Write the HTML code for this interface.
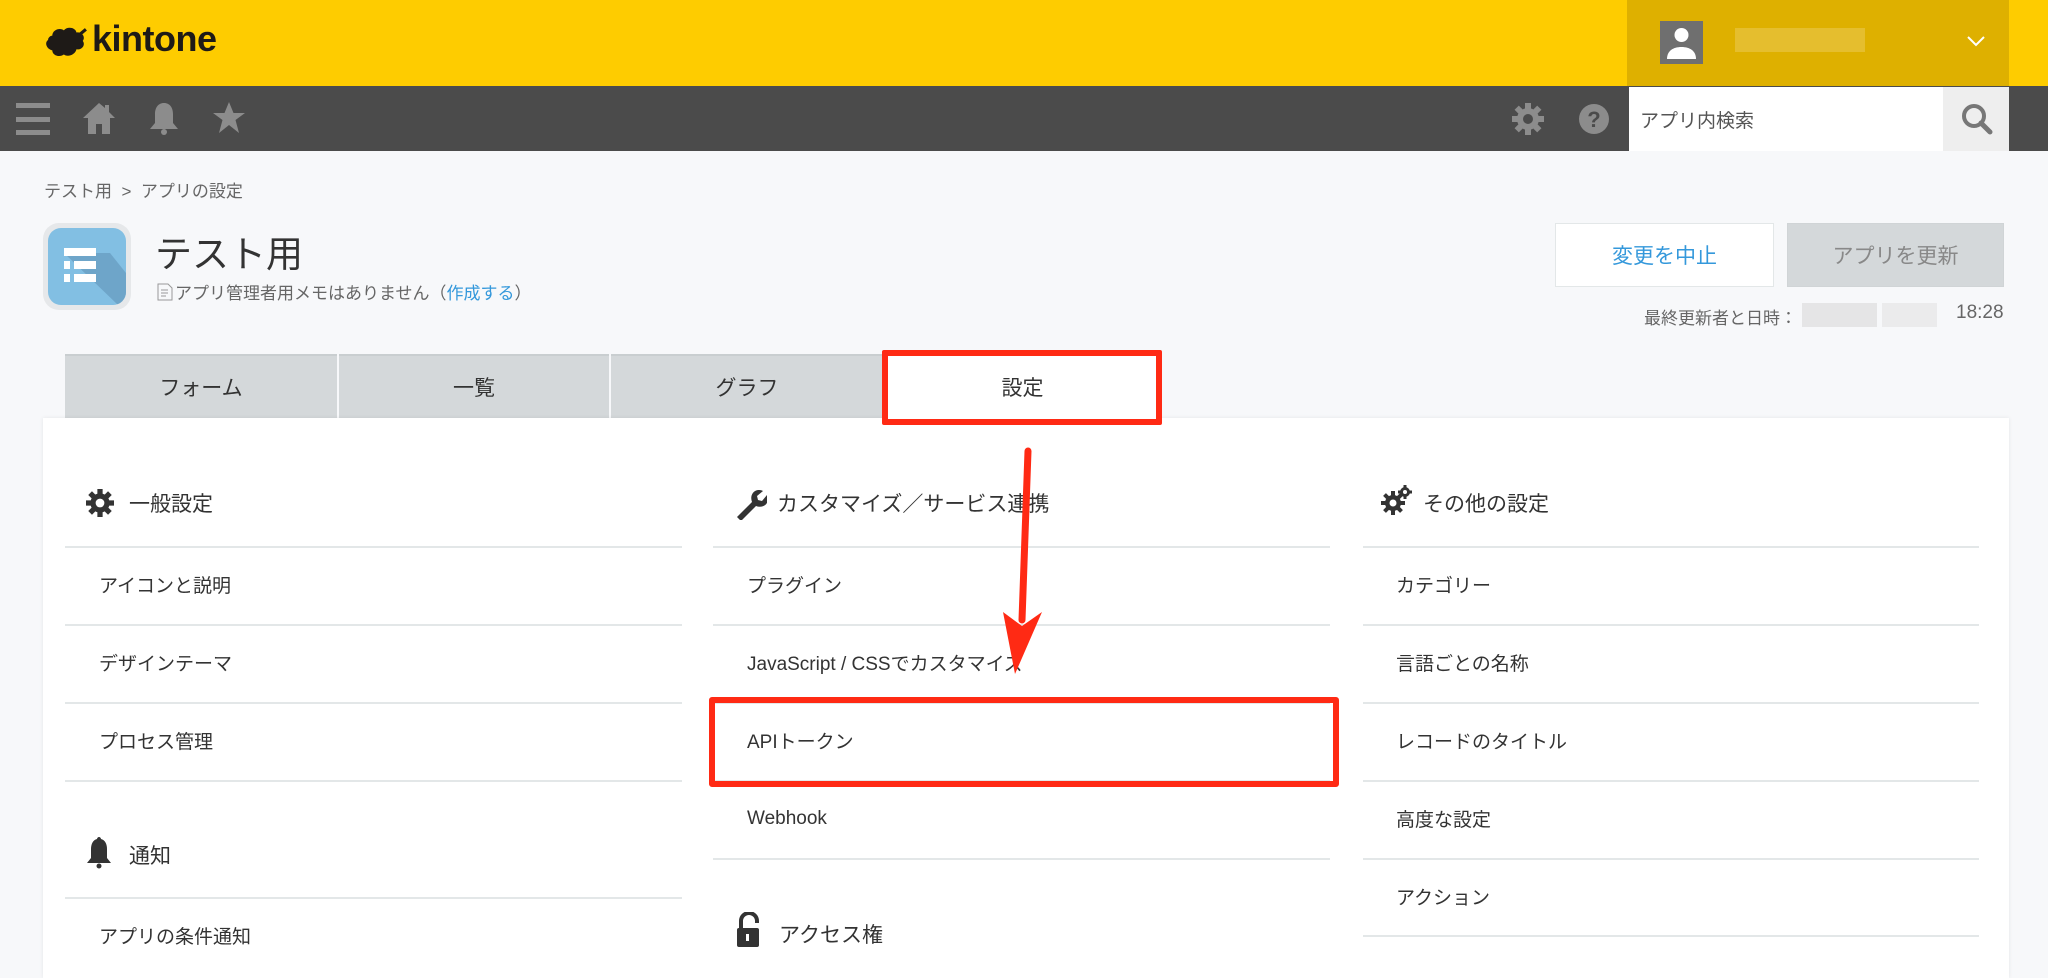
<!DOCTYPE html>
<html><head><meta charset="utf-8"><style>
*{margin:0;padding:0;box-sizing:border-box}
body{width:2048px;height:961px;overflow:hidden;background:#f7f8fa;font-family:"Liberation Sans","Noto Sans CJK JP",sans-serif;color:#333;position:relative}
.a{position:absolute}
.t{position:absolute;white-space:nowrap}
.line{position:absolute;height:2px;background:#e3e7e8}
.row{position:absolute;font-size:19px;color:#333;white-space:nowrap}
.h{position:absolute;font-size:21px;color:#333;white-space:nowrap}
</style></head><body>
<div class="a" style="left:0;top:0;width:2048px;height:86px;background:#fecc00"></div>
<div class="a" style="left:1627px;top:0;width:382px;height:86px;background:#deb000"></div>
<svg class="a" style="left:46px;top:25px" width="42" height="36" viewBox="0 0 40 34"><path d="M6 10c0-6 8-8 11-5 3-4 11-3 12 2 5-1 9 4 6 8 3 4-1 9-6 8-1 5-8 8-12 5-4 3-11 1-11-4-5-1-8-7-4-10 0-2 2-4 4-4z" fill="#1e1a17"/><path d="M32 9l6-5" stroke="#1e1a17" stroke-width="3"/></svg>
<div class="t" style="left:92px;top:18px;font-size:36px;font-weight:bold;color:#1e1a17;letter-spacing:-0.5px">kintone</div>
<div class="a" style="left:1660px;top:21px;width:43px;height:43px;background:#6f6f6f"></div>
<svg class="a" style="left:1660px;top:21px" width="43" height="43" viewBox="0 0 43 43"><circle cx="21.5" cy="14" r="7" fill="#fff"/><path d="M7 38c0-8 6-12 14.5-12S36 30 36 38z" fill="#fff"/></svg>
<div class="a" style="left:1735px;top:28px;width:130px;height:24px;background:#e6c23a;opacity:.8"></div>
<svg class="a" style="left:1966px;top:34px" width="20" height="14"><path d="M2 3l8 8 8-8" stroke="#fff" stroke-width="2" fill="none"/></svg>
<div class="a" style="left:0;top:86px;width:2048px;height:65px;background:#4b4b4b"></div>
<svg class="a" style="left:16px;top:102px" width="34" height="34"><g fill="#8c8c8c"><rect x="0" y="1" width="34" height="5"/><rect x="0" y="15" width="34" height="5"/><rect x="0" y="28" width="34" height="5"/></g></svg>
<svg class="a" style="left:82px;top:101px" width="34" height="34" viewBox="0 0 34 34"><path d="M17 2L1 17h5v16h8v-10h6v10h8V17h5L27 11V4h-4v3z" fill="#8c8c8c"/></svg>
<svg class="a" style="left:147px;top:101px" width="34" height="36" viewBox="0 0 34 36"><path d="M17 2c-6 0-9 5-9 11v9l-5 6h28l-5-6v-9c0-6-3-11-9-11z" fill="#8c8c8c"/><circle cx="17" cy="31" r="3" fill="#8c8c8c"/></svg>
<svg class="a" style="left:212px;top:101px" width="34" height="34" viewBox="0 0 34 34"><path d="M17 1l4.5 11H33l-9.5 7 3.5 13-10-8-10 8 3.5-13L1 12h11.5z" fill="#8c8c8c"/></svg>
<svg class="a" style="left:1512px;top:103px" width="32" height="32" viewBox="0 0 32 32"><g fill="#8c8c8c"><circle cx="16" cy="16" r="11"/><rect x="13" y="0" width="6" height="32"/><rect x="0" y="13" width="32" height="6"/><rect x="13" y="0" width="6" height="32" transform="rotate(45 16 16)"/><rect x="13" y="0" width="6" height="32" transform="rotate(-45 16 16)"/></g><circle cx="16" cy="16" r="5" fill="#4b4b4b"/></svg>
<svg class="a" style="left:1578px;top:103px" width="32" height="32" viewBox="0 0 32 32"><circle cx="16" cy="16" r="15" fill="#8c8c8c"/><text x="16" y="24" text-anchor="middle" font-family="Liberation Sans" font-weight="bold" font-size="22" fill="#4b4b4b">?</text></svg>
<div class="a" style="left:1629px;top:87px;width:314px;height:64px;background:#fff"></div>
<div class="t" style="left:1640px;top:106px;font-size:19px;color:#555">アプリ内検索</div>
<div class="a" style="left:1943px;top:87px;width:66px;height:64px;background:#eeeeee"></div>
<svg class="a" style="left:1961px;top:103px" width="32" height="32" viewBox="0 0 32 32"><circle cx="13" cy="13" r="10" stroke="#777" stroke-width="4" fill="none"/><path d="M20 20l9 9" stroke="#777" stroke-width="5" stroke-linecap="round"/></svg>

<div class="t" style="left:44px;top:177px;font-size:17px;color:#666">テスト用&nbsp;&nbsp;&gt;&nbsp;&nbsp;アプリの設定</div>
<div class="a" style="left:43px;top:223px;width:88px;height:87px;border-radius:16px;background:#e6e8ea"></div>
<div class="a" style="left:48px;top:228px;width:78px;height:77px;border-radius:13px;background:#82bfe3;overflow:hidden">
<svg width="78" height="77"><path d="M16 25L70 77H78V45L62 25z" fill="#6ea5c9"/><g fill="#fff"><rect x="16" y="20" width="32" height="8"/><rect x="16" y="33" width="6" height="8"/><rect x="26" y="33" width="22" height="8"/><rect x="16" y="46" width="6" height="8"/><rect x="26" y="46" width="22" height="8"/></g></svg></div>
<div class="t" style="left:155px;top:224px;font-size:37px;color:#333">テスト用</div>
<svg class="a" style="left:157px;top:283px" width="16" height="18"><path d="M1 1h10l4 4v12H1z" fill="none" stroke="#999"/><path d="M4 7h7M4 10h7M4 13h5" stroke="#999"/></svg>
<div class="t" style="left:175px;top:279px;font-size:17px;color:#666">アプリ管理者用メモはありません（<span style="color:#3498db">作成する</span>）</div>

<div class="a" style="left:1555px;top:223px;width:219px;height:64px;background:#fff;border:1px solid #e3e7e8"></div>
<div class="t" style="left:1555px;top:240px;width:219px;text-align:center;font-size:21px;color:#3498db">変更を中止</div>
<div class="a" style="left:1787px;top:223px;width:217px;height:64px;background:#d4d8da;border:1px solid #d0d4d6"></div>
<div class="t" style="left:1787px;top:240px;width:217px;text-align:center;font-size:21px;color:#888">アプリを更新</div>
<div class="t" style="left:1644px;top:304px;font-size:17px;color:#666">最終更新者と日時：</div>
<div class="a" style="left:1802px;top:303px;width:75px;height:24px;background:#ddd;opacity:.7"></div>
<div class="a" style="left:1882px;top:303px;width:55px;height:24px;background:#e6e6e6;opacity:.7"></div>
<div class="t" style="left:1956px;top:302px;font-size:19px;color:#666">18:28</div>

<div class="a" style="left:65px;top:354px;width:272px;height:66px;background:#d4d8da;border-top:2px solid #c9ced0"></div>
<div class="a" style="left:339px;top:354px;width:270px;height:66px;background:#d4d8da;border-top:2px solid #c9ced0"></div>
<div class="a" style="left:611px;top:354px;width:272px;height:66px;background:#d4d8da;border-top:2px solid #c9ced0"></div>
<div class="t" style="left:65px;top:372px;width:272px;text-align:center;font-size:21px">フォーム</div>
<div class="t" style="left:339px;top:372px;width:270px;text-align:center;font-size:21px">一覧</div>
<div class="t" style="left:611px;top:372px;width:272px;text-align:center;font-size:21px">グラフ</div>
<div class="a" style="left:43px;top:418px;width:1966px;height:560px;background:#fff;box-shadow:0 0 4px rgba(0,0,0,.08)"></div>
<div class="a" style="left:885px;top:354px;width:275px;height:66px;background:#fff"></div>
<div class="t" style="left:885px;top:372px;width:275px;text-align:center;font-size:21px">設定</div>
<div class="a" style="left:882px;top:350px;width:280px;height:75px;border:6px solid #ff2a14;border-radius:2px"></div>

<!-- col1 -->
<svg class="a" style="left:86px;top:488px" width="28" height="30" viewBox="0 0 32 32"><g fill="#333"><circle cx="16" cy="16" r="11"/><rect x="13" y="0" width="6" height="32"/><rect x="0" y="13" width="32" height="6"/><rect x="13" y="0" width="6" height="32" transform="rotate(45 16 16)"/><rect x="13" y="0" width="6" height="32" transform="rotate(-45 16 16)"/></g><circle cx="16" cy="16" r="5" fill="#fff"/></svg>
<div class="h" style="left:129px;top:488px">一般設定</div>
<div class="line" style="left:65px;top:546px;width:617px"></div>
<div class="row" style="left:99px;top:571px">アイコンと説明</div>
<div class="line" style="left:65px;top:624px;width:617px"></div>
<div class="row" style="left:99px;top:649px">デザインテーマ</div>
<div class="line" style="left:65px;top:702px;width:617px"></div>
<div class="row" style="left:99px;top:727px">プロセス管理</div>
<div class="line" style="left:65px;top:780px;width:617px"></div>
<svg class="a" style="left:86px;top:836px" width="26" height="34" viewBox="0 0 26 34"><path d="M13 1c-1 0-2 1-2 2-4 1-6 5-6 10v9l-4 5h24l-4-5v-9c0-5-2-9-6-10 0-1-1-2-2-2z" fill="#333"/><circle cx="13" cy="30" r="2.5" fill="#333"/></svg>
<div class="h" style="left:129px;top:840px">通知</div>
<div class="line" style="left:65px;top:897px;width:617px"></div>
<div class="row" style="left:99px;top:922px">アプリの条件通知</div>

<!-- col2 -->
<svg class="a" style="left:733px;top:486px" width="34" height="34" viewBox="0 0 34 34"><path d="M4 31l15-15c-2-5 0-11 6-12 2 0 3 0 5 1l-6 5 1 4 4 1 5-6c1 2 1 4 1 5-1 6-7 8-12 6L8 35z" fill="#333"/></svg>
<div class="h" style="left:777px;top:488px">カスタマイズ／サービス連携</div>
<div class="line" style="left:713px;top:546px;width:617px"></div>
<div class="row" style="left:747px;top:571px">プラグイン</div>
<div class="line" style="left:713px;top:624px;width:617px"></div>
<div class="row" style="left:747px;top:649px">JavaScript / CSSでカスタマイズ</div>
<div class="line" style="left:713px;top:702px;width:617px"></div>
<div class="row" style="left:747px;top:727px">APIトークン</div>
<div class="line" style="left:713px;top:780px;width:617px"></div>
<div class="row" style="left:747px;top:808px">Webhook</div>
<div class="line" style="left:713px;top:858px;width:617px"></div>
<svg class="a" style="left:736px;top:912px" width="26" height="36" viewBox="0 0 26 36"><path d="M5 16V9a8 8 0 0 1 16 0v2" stroke="#333" stroke-width="4" fill="none"/><rect x="1" y="16" width="22" height="19" rx="2" fill="#333"/><rect x="10" y="22" width="3" height="7" fill="#fff"/></svg>
<div class="h" style="left:779px;top:919px">アクセス権</div>

<!-- col3 -->
<svg class="a" style="left:1380px;top:484px" width="34" height="34" viewBox="0 0 34 34"><g fill="#333"><circle cx="13" cy="19" r="8"/><rect x="11" y="7" width="4" height="24"/><rect x="1" y="17" width="24" height="4"/><rect x="11" y="7" width="4" height="24" transform="rotate(45 13 19)"/><rect x="11" y="7" width="4" height="24" transform="rotate(-45 13 19)"/><circle cx="25" cy="8" r="5"/><rect x="23.5" y="1" width="3" height="14"/><rect x="18" y="6.5" width="14" height="3"/></g><circle cx="13" cy="19" r="3.5" fill="#fff"/><circle cx="25" cy="8" r="2" fill="#fff"/></svg>
<div class="h" style="left:1423px;top:488px">その他の設定</div>
<div class="line" style="left:1363px;top:546px;width:616px"></div>
<div class="row" style="left:1396px;top:571px">カテゴリー</div>
<div class="line" style="left:1363px;top:624px;width:616px"></div>
<div class="row" style="left:1396px;top:649px">言語ごとの名称</div>
<div class="line" style="left:1363px;top:702px;width:616px"></div>
<div class="row" style="left:1396px;top:727px">レコードのタイトル</div>
<div class="line" style="left:1363px;top:780px;width:616px"></div>
<div class="row" style="left:1396px;top:805px">高度な設定</div>
<div class="line" style="left:1363px;top:858px;width:616px"></div>
<div class="row" style="left:1396px;top:883px">アクション</div>
<div class="line" style="left:1363px;top:935px;width:616px"></div>

<div class="a" style="left:709px;top:697px;width:630px;height:90px;border:6px solid #ff2a14;border-radius:3px"></div>
<svg class="a" style="left:0;top:0" width="2048" height="961"><path d="M1028 451L1022 620" stroke="#ff2a14" stroke-width="7" stroke-linecap="round"/><path d="M1003 612L1015 674L1042 612L1022 626z" fill="#ff2a14"/></svg>
</body></html>
